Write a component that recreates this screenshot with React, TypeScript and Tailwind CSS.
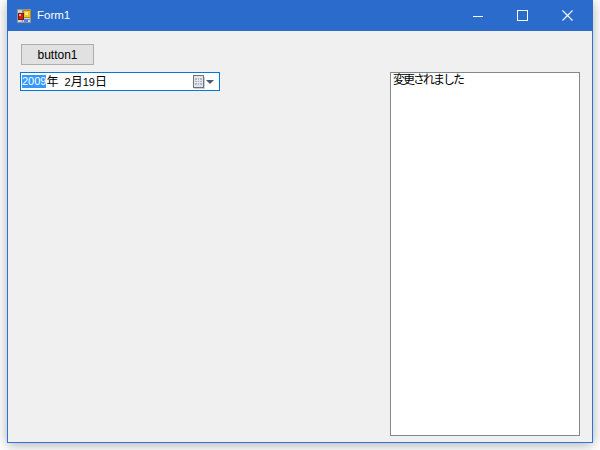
const uiFont = "font-['Liberation_Sans','Noto_Sans_CJK_JP',sans-serif]";

function AppIcon() {
  return (
    <svg width="14" height="14" viewBox="0 0 14 14" shapeRendering="crispEdges">
      <rect x="0.5" y="0.5" width="13" height="13" fill="#c9d3df" stroke="#8f949b" />
      <path d="M5.5 1v12M1 5.5h4M1 10.5h12" stroke="#8f949b" />
      <rect x="6" y="1" width="7" height="7" fill="#f2c320" stroke="#b98b16" />
      <rect x="8" y="3" width="3" height="3" fill="#fbe58a" />
      <rect x="1" y="4" width="5" height="6" fill="#c8201c" stroke="#7d1512" />
      <rect x="2" y="5" width="2" height="2" fill="#f3a0a0" />
      <rect x="7" y="10" width="4" height="3" fill="#4f86dd" />
    </svg>
  );
}

function CalendarIcon() {
  return (
    <svg width="14" height="16" viewBox="0 0 14 16" shapeRendering="crispEdges">
      <rect x="1.5" y="1.5" width="10" height="12" fill="#e4e6e8" stroke="#6f7378" />
      <rect x="3" y="4" width="7" height="7" fill="#aeb8c6" />
      <path d="M5.5 4v7M7.5 4v7M3 6.5h7M3 8.5h7" stroke="#dfe4ea" />
      <rect x="2" y="14" width="11" height="1" fill="#cfcfcf" />
      <rect x="12" y="3" width="1" height="11" fill="#cfcfcf" />
    </svg>
  );
}

export default function App() {
  return (
    <div className={`w-[600px] h-[450px] overflow-hidden bg-white ${uiFont}`}>
      <div className="ml-[7px] w-[586px] h-[443px] flex flex-col border border-[#2b73e0] bg-[#f0f0f0] shadow-[0_2px_12px_rgba(0,0,0,0.32)]">
        {/* Title bar */}
        <div className="h-[31px] shrink-0 -mx-px -mt-px pl-[10px] pr-[3px] flex items-center bg-[#2b6bcc] text-white">
          <AppIcon />
          <span className="ml-[6px] pt-[1px] text-[11.5px] leading-none">Form1</span>
          <div className="ml-auto flex items-center">
            <button className="w-[45px] h-[31px] flex items-center justify-center">
              <svg width="10" height="10" viewBox="0 0 10 10" shapeRendering="crispEdges"><path d="M0 5.5h10" stroke="#fff" /></svg>
            </button>
            <button className="w-[45px] h-[31px] flex items-center justify-center">
              <svg width="11" height="11" viewBox="0 0 11 11" shapeRendering="crispEdges"><rect x="0.5" y="0.5" width="10" height="10" fill="none" stroke="#fff" /></svg>
            </button>
            <button className="w-[45px] h-[31px] flex items-center justify-center">
              <svg width="11" height="11" viewBox="0 0 11 11"><path d="M0.5 0.5l10 10M10.5 0.5l-10 10" stroke="#fff" strokeWidth="1.1" /></svg>
            </button>
          </div>
        </div>

        <div className="flex-1 flex justify-between px-[12px] pt-[13px] pb-[6px]">
          <div className="flex flex-col">
            <button className="ml-[1px] w-[73px] h-[21px] border border-[#adadad] bg-[#e1e1e1] text-[12px] leading-none text-black">button1</button>
            <div className="mt-[7px] w-[200px] h-[19px] flex items-center border-[1.5px] border-[#0078d7] bg-white text-[11px] leading-none text-black">
              <span className="ml-[1px] py-[1px] bg-[#3399ff] text-white">2009</span>
              <span className="whitespace-pre"><span className="text-[12px]">年</span>  2<span className="text-[12px]">月</span>19<span className="text-[12px]">日</span></span>
              <div className="ml-auto mr-[5px] flex items-center">
                <CalendarIcon />
                <span className="w-0 h-0 border-x-[4px] border-x-transparent border-t-[4px] border-t-[#4a5a72]" />
              </div>
            </div>
          </div>
          <div className="mt-[28px] w-[190px] border border-[#828790] bg-white pl-[2px] text-[12px] tracking-[-2px] leading-[14px] text-black">変更されました</div>
        </div>
      </div>
    </div>
  );
}
